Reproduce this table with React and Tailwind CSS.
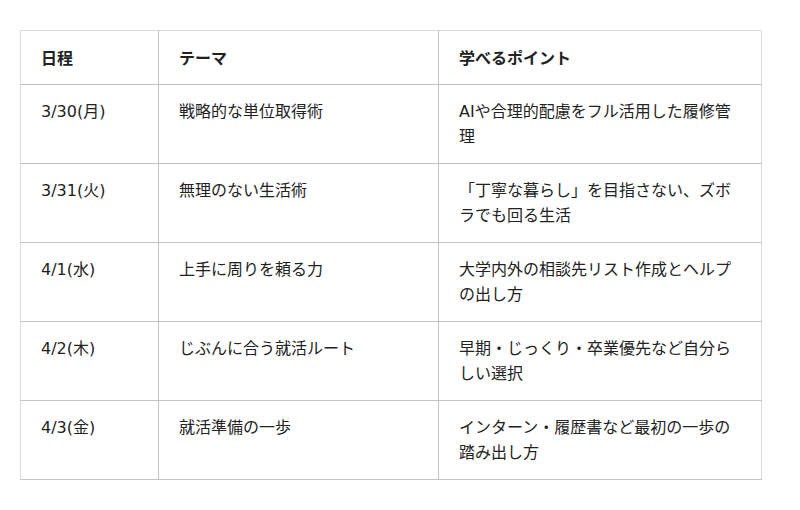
const rows = [
  { date: "3/30(月)", theme: "戦略的な単位取得術", point: "AIや合理的配慮をフル活用した履修管理" },
  { date: "3/31(火)", theme: "無理のない生活術", point: "「丁寧な暮らし」を目指さない、ズボラでも回る生活" },
  { date: "4/1(水)", theme: "上手に周りを頼る力", point: "大学内外の相談先リスト作成とヘルプの出し方" },
  { date: "4/2(木)", theme: "じぶんに合う就活ルート", point: "早期・じっくり・卒業優先など自分らしい選択" },
  { date: "4/3(金)", theme: "就活準備の一歩", point: "インターン・履歴書など最初の一歩の踏み出し方" },
]

export default function App() {
  return (
    <div className="w-[800px] h-[510px] bg-white pt-[30px] px-[20px]" style={{ fontFamily: '"DejaVu Sans", "Noto Sans CJK JP", sans-serif' }}>
      <table className="w-[741px] border-collapse table-fixed text-[16px] leading-[25px] text-[#222] border border-[#dcdcdc]">
        <colgroup>
          <col className="w-[138px]" />
          <col className="w-[280px]" />
          <col className="w-[323px]" />
        </colgroup>
        <thead>
          <tr>
            <th className="text-left font-bold px-[20px] pt-[15px] pb-[13px] border-b border-r border-[#c4c4c4]">日程</th>
            <th className="text-left font-bold px-[20px] pt-[15px] pb-[13px] border-b border-r border-[#c4c4c4]">テーマ</th>
            <th className="text-left font-bold px-[20px] pt-[15px] pb-[13px] border-b border-[#c4c4c4]">学べるポイント</th>
          </tr>
        </thead>
        <tbody>
          {rows.map((r, i) => (
            <tr key={i}>
              <td className="align-top px-[20px] pt-[14px] pb-[14px] border-b border-r border-[#c4c4c4]">{r.date}</td>
              <td className="align-top px-[20px] pt-[14px] pb-[14px] border-b border-r border-[#c4c4c4]">{r.theme}</td>
              <td className="align-top px-[20px] pt-[14px] pb-[14px] border-b border-[#c4c4c4] h-[79px]">{r.point}</td>
            </tr>
          ))}
        </tbody>
      </table>
    </div>
  )
}
